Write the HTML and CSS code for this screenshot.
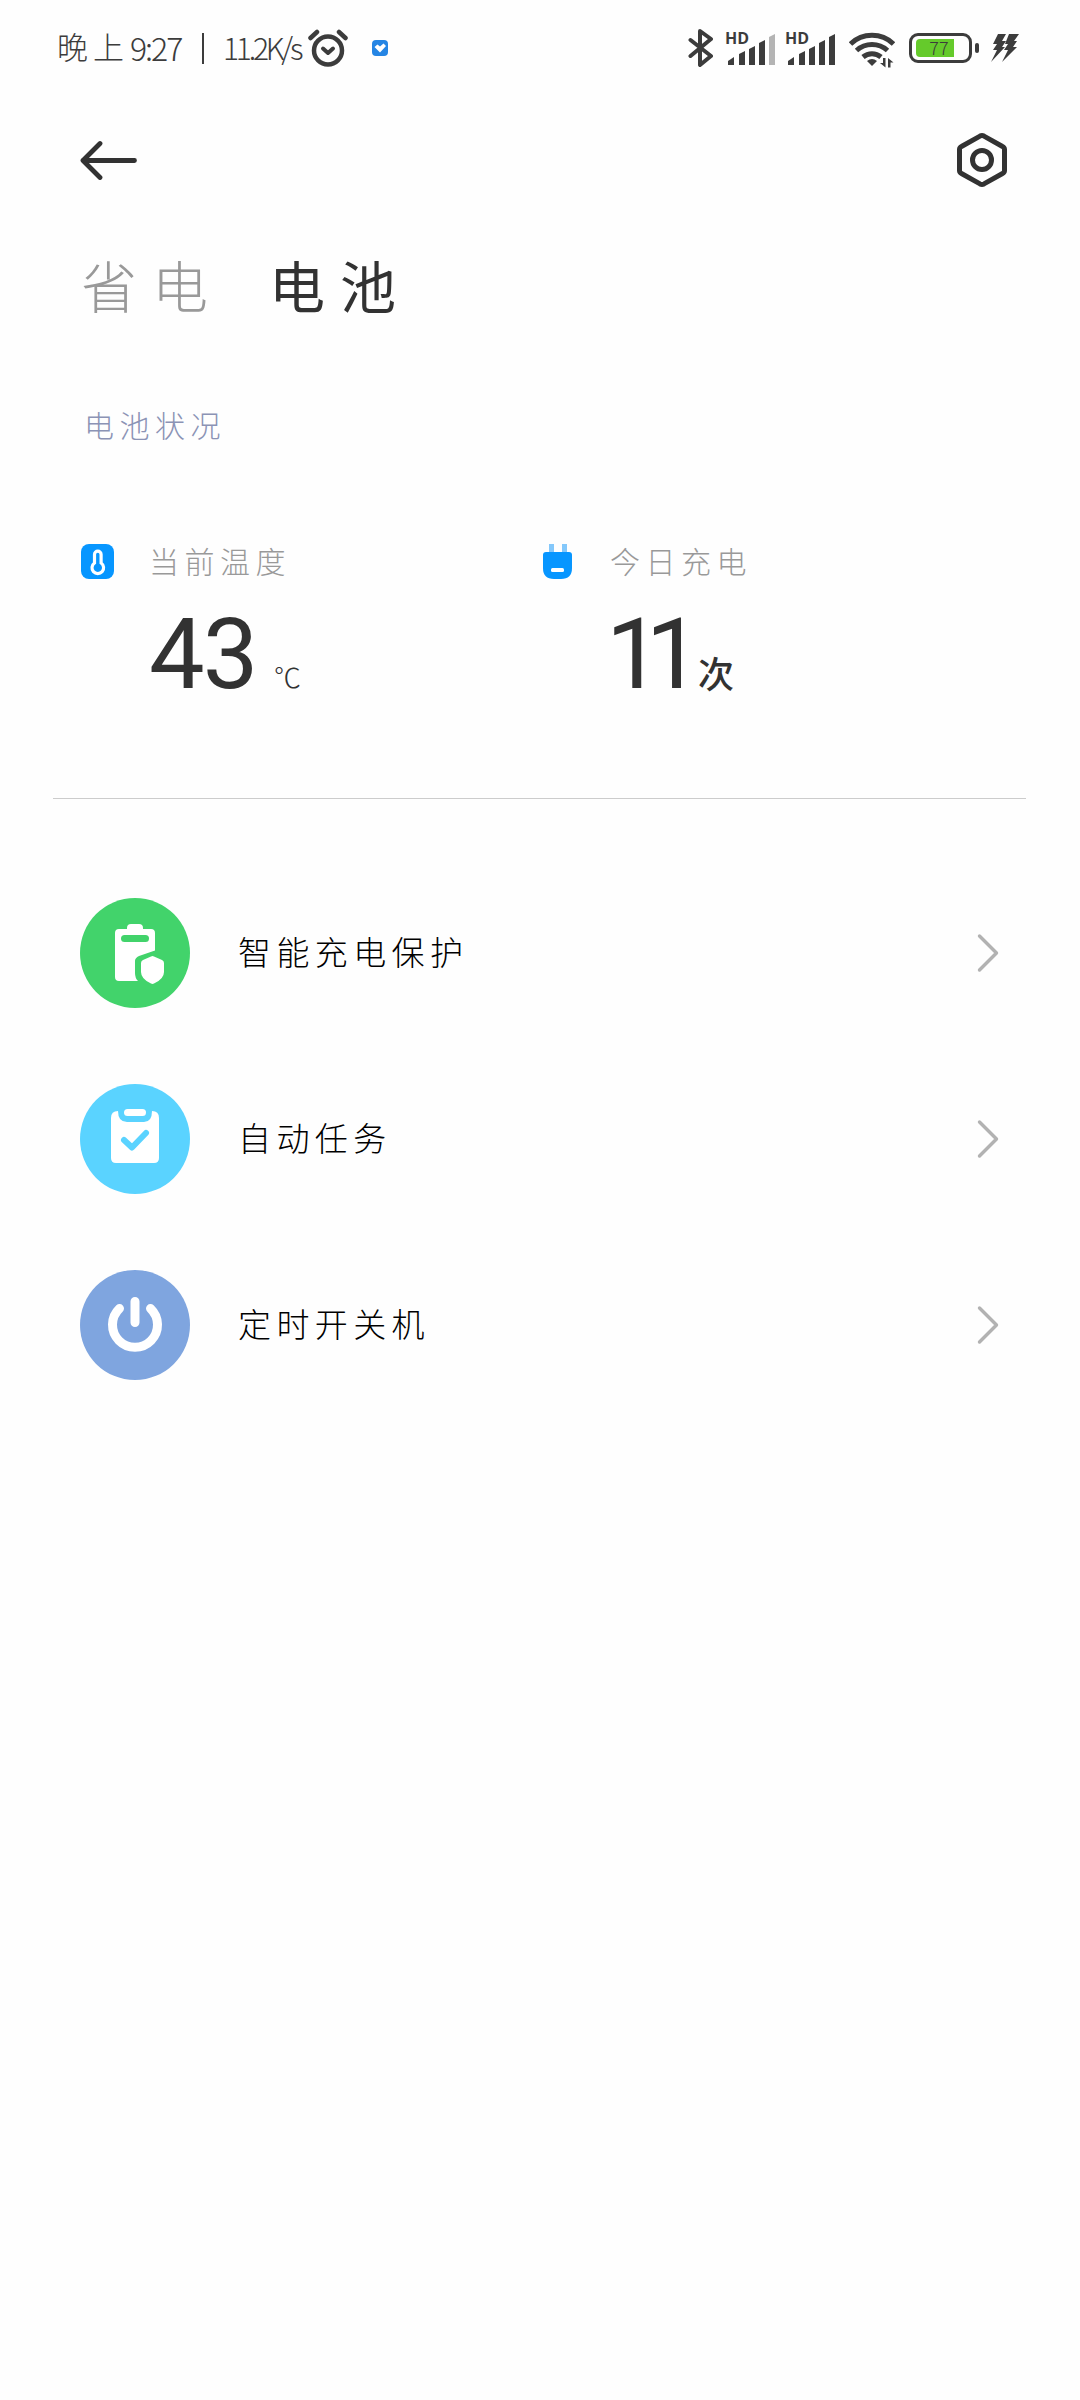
FILE: index.html
```html
<!DOCTYPE html>
<html lang="zh-CN">
<head>
  <meta charset="UTF-8">
  <title>电池</title>
  <link rel="stylesheet" href="styles.css">
</head>
<body>
  <div class="status-bar">
    <div class="status-left">
      <span class="period">晚上</span>
      <span class="time">9:27</span>
      <span class="separator"></span>
      <span class="speed">11.2K/s</span>
      <svg class="alarm" width="40" height="38" viewBox="0 0 40 38" fill="none" stroke="#3c3c3c" stroke-linecap="round">
        <circle cx="20" cy="21.5" r="14" stroke-width="4.500"/>
        <path d="M2.500 9L9 3M31 3l6.500 6" stroke-width="4.500"/>
        <path d="M15 19.500l5 4.500 5-4.500" stroke-width="4" stroke-linejoin="round"/>
      </svg>
      <svg width="16" height="16" viewBox="0 0 16 16">
        <rect width="16" height="16" rx="4" fill="#2585e4"/>
        <path d="M2.500 7l3-2.500L8 6.500l3.500-3L14 6 8 12.500z" fill="#fff"/>
      </svg>
    </div>
    <div class="status-right">
      <svg class="bluetooth" width="26" height="40" viewBox="0 0 26 40" fill="none" stroke="#3c3c3c" stroke-width="4" stroke-linejoin="round" stroke-linecap="round">
        <path d="M2.500 12L23 28l-11 9V3l11 8L2.500 28"/>
      </svg>
      <div class="signal">
        <span class="hd">HD</span>
        <svg width="50" height="32" viewBox="0 0 50 32" fill="#3c3c3c">
          <path d="M1 32v-4l6-4v8zM12 32V21l6-3v14zM22 32V16l6-3v19zM32 32V10l6-3v25z"/>
          <path d="M42 32V4l6-3v31z" fill="#b4b4b4"/>
        </svg>
      </div>
      <div class="signal">
        <span class="hd">HD</span>
        <svg width="50" height="32" viewBox="0 0 50 32" fill="#3c3c3c">
          <path d="M1 32v-4l6-4v8zM12 32V21l6-3v14zM22 32V16l6-3v19zM32 32V10l6-3v25zM42 32V4l6-3v31z"/>
        </svg>
      </div>
      <svg class="wifi" width="46" height="36" viewBox="0 0 46 36" fill="none" stroke="#3c3c3c" stroke-width="5">
        <path d="M1.500 12a31 31 0 0 1 43 0M7.500 18.500a23 23 0 0 1 31 0M14 25a14 14 0 0 1 18 0"/>
        <path d="M18 29q5-4 10 0l-5 5z" fill="#3c3c3c" stroke="none"/>
        <path d="M31 31l5.500 4.500V26H34v5zM39 35.500V26l5.500 4.500h-3v5z" fill="#3c3c3c" stroke="none"/>
      </svg>
      <div class="battery">
        <div class="battery-body">
          <div class="battery-level">77</div>
        </div>
        <div class="battery-cap"></div>
      </div>
      <svg class="bolt" width="28" height="28" viewBox="0 0 28 28" fill="#3c3c3c">
        <path d="M7 0h8l-4 7h4l-4 6h3L0 28l6-12H2l4-6H2z"/>
        <path d="M18 0h10l-5 7h3l-4 6h4L11 28l6-12h-4l4-6h-3z"/>
      </svg>
    </div>
  </div>

  <div class="header">
    <svg width="58" height="40" viewBox="0 0 58 40" fill="none" stroke="#323232" stroke-width="4.800" stroke-linecap="round" stroke-linejoin="round">
      <path d="M20 3.500L3 20.500l17 17M3 20.500h51.500"/>
    </svg>
    <svg width="50" height="54" viewBox="0 0 50 54" fill="none" stroke="#323232" stroke-width="5">
      <path d="M23 3.100q2-1 4 0l18.500 10.400q2 1 2 3v21q0 2-2 3L27 50.900q-2 1-4 0L4.500 40.500q-2-1-2-3v-21q0-2 2-3z"/>
      <circle cx="25" cy="27" r="9.500"/>
    </svg>
  </div>

  <div class="tabs">
    <span class="tab">省电</span>
    <span class="tab active">电池</span>
  </div>

  <div class="section-title">电池状况</div>

  <div class="stats">
    <div class="stat">
      <div class="stat-label">
        <svg width="34" height="36" viewBox="0 0 34 36">
          <rect x="0" y="0" width="33" height="35" rx="8" fill="#0796ff"/>
          <path d="M13.500 19v-8.500a3.300 3.300 0 0 1 6.600 0V19a5.800 5.800 0 1 1-6.600 0z" fill="none" stroke="#fff" stroke-width="3.200"/>
        </svg>
        <span>当前温度</span>
      </div>
      <div class="stat-value">
        <span class="number">43</span>
        <span class="celsius">℃</span>
      </div>
    </div>
    <div class="stat">
      <div class="stat-label">
        <svg width="34" height="36" viewBox="0 0 34 36">
          <path d="M7 0h5v9H7zM20 0h5v9h-5z" fill="#84c8fb"/>
          <path d="M4 8h23q3 0 3 3v13q0 11-11 11h-7Q1 35 1 24V11q0-3 3-3z" fill="#0796ff"/>
          <rect x="9" y="24" width="13" height="4" rx="1.500" fill="#fff"/>
        </svg>
        <span>今日充电</span>
      </div>
      <div class="stat-value">
        <span class="number ones">11</span>
        <span class="times">次</span>
      </div>
    </div>
  </div>

  <div class="list">
    <div class="item">
      <svg class="item-icon" width="110" height="110" viewBox="0 0 110 110">
        <circle cx="55" cy="55" r="55" fill="#42d36b"/>
        <path d="M39 31h8v-1q0-4 4-4h8q4 0 4 4v1h8q4 0 4 4v17.500L59 58q-4 2-4 5v12q0 5 3 8H39q-4 0-4-4V35q0-4 4-4z" fill="#fff"/>
        <rect x="41" y="37" width="28" height="7" rx="3.500" fill="#42d36b"/>
        <path d="M71 58.500q1.500-.800 3 0l8 3.500q2 1 2 3v9q0 7-10 11.500-1.500.800-3 0Q61 81 61 74v-9q0-2 2-3z" fill="#fff"/>
      </svg>
      <span class="item-label">智能充电保护</span>
      <svg class="arrow" width="22" height="40" viewBox="0 0 22 40"><path d="M2.500 3l17 17-17 17"/></svg>
    </div>
    <div class="item">
      <svg class="item-icon" width="110" height="110" viewBox="0 0 110 110">
        <circle cx="55" cy="55" r="55" fill="#5ad3ff"/>
        <path d="M38 27q-7 0-7 7v40q0 5 5 5h38q5 0 5-5V34q0-7-7-7 0 11-8 11H47q-9 0-9-11z" fill="#fff"/>
        <rect x="44" y="25" width="22" height="7" rx="3.500" fill="#fff"/>
        <path d="M44 56l8 7.500L66 49" fill="none" stroke="#5ad3ff" stroke-width="6" stroke-linecap="round" stroke-linejoin="round"/>
      </svg>
      <span class="item-label">自动任务</span>
      <svg class="arrow" width="22" height="40" viewBox="0 0 22 40"><path d="M2.500 3l17 17-17 17"/></svg>
    </div>
    <div class="item">
      <svg class="item-icon" width="110" height="110" viewBox="0 0 110 110">
        <circle cx="55" cy="55" r="55" fill="#7fa5df"/>
        <path d="M55 31.500v21M39.500 38.500a22.500 22.500 0 1 0 31 0" fill="none" stroke="#fff" stroke-width="9" stroke-linecap="round"/>
      </svg>
      <span class="item-label">定时开关机</span>
      <svg class="arrow" width="22" height="40" viewBox="0 0 22 40"><path d="M2.500 3l17 17-17 17"/></svg>
    </div>
  </div>
</body>
</html>
```
FILE: styles.css
```css
* {
  box-sizing: border-box;
}

body {
  margin: 0;
  min-height: 2400px;
  background: #fefefe;
  font-family: "Noto Sans CJK SC", sans-serif;
  font-weight: 300;
  color: #323232;
}

svg {
  display: block;
  flex: none;
}

.status-bar {
  display: flex;
  justify-content: space-between;
  align-items: center;
  height: 96px;
  padding: 0 61px 0 57px;
  color: #3c3c3c;
}

.status-left,
.status-right {
  display: flex;
  align-items: center;
  white-space: nowrap;
}

.period {
  width: 73px;
  padding-bottom: 5px;
  font-size: 31px;
  letter-spacing: 5px;
}

.time {
  width: 63px;
  padding-bottom: 3px;
  font-size: 32px;
  letter-spacing: -2px;
}

.separator {
  width: 2px;
  height: 31px;
  margin: 0 19px 0 9px;
  background: #3c3c3c;
}

.speed {
  width: 85px;
  padding-bottom: 3px;
  font-size: 30px;
  letter-spacing: -3.2px;
}

.alarm {
  margin-right: 24px;
}

.signal {
  position: relative;
  padding-top: 2px;
  margin-right: 10px;
}

.hd {
  position: absolute;
  left: -2px;
  top: -1px;
  font: 700 16px/16px "Open Sans", sans-serif;
}

.bluetooth {
  margin-right: 13px;
}

.wifi {
  margin: 4px 14px 0 2px;
}

.battery {
  display: flex;
  align-items: center;
  margin-right: 12px;
}

.battery-body {
  width: 63px;
  height: 30px;
  padding: 3px 4px;
  border: 3px solid #3c3c3c;
  border-radius: 9px;
}

.battery-level {
  width: 38px;
  height: 18px;
  padding-left: 8px;
  border-radius: 4px 0 0 4px;
  background: #65ca2b;
  font-size: 18px;
  line-height: 17px;
  text-align: center;
}

.battery-cap {
  width: 4px;
  height: 10px;
  margin-left: 3px;
  border-radius: 2px;
  background: #3c3c3c;
}

.header {
  display: flex;
  justify-content: space-between;
  align-items: center;
  height: 128px;
  padding: 0 73px 0 80px;
}

.tabs {
  display: flex;
  gap: 46px;
  height: 128px;
  padding-left: 81px;
  font-size: 56px;
  line-height: 120px;
}

.tab {
  width: 142px;
  letter-spacing: 15px;
  color: #999;
}

.tab.active {
  font-weight: 400;
  color: #323232;
}

.section-title {
  height: 148px;
  padding-left: 84px;
  font-size: 30px;
  line-height: 145px;
  letter-spacing: 5.5px;
  color: #8b93b5;
}

.stats {
  display: grid;
  grid-template-columns: 461px 1fr;
  height: 299px;
  margin: 0 54px 0 53px;
  padding: 40px 27px 0 28px;
  border-bottom: 1px solid #ccc;
}

.stat-label {
  display: flex;
  align-items: center;
  gap: 34px;
  height: 44px;
  font-size: 30px;
  line-height: 38px;
  letter-spacing: 5.5px;
  color: #999;
}

.stat-label span {
  padding-bottom: 5px;
}

.stat-value {
  display: flex;
  align-items: baseline;
  padding-left: 68px;
}

.number {
  width: 125px;
  font: 400 99px/141px Roboto, sans-serif;
  letter-spacing: -2px;
}

.number.ones {
  width: 88px;
  margin-left: -4px;
  letter-spacing: -16px;
}

.celsius {
  font-size: 27px;
}

.times {
  margin-left: 4px;
  font-size: 36px;
  font-weight: 500;
}

.list {
  padding-top: 61px;
}

.item {
  display: flex;
  align-items: center;
  height: 186px;
  padding: 0 81px 0 80px;
}

.item-label {
  flex: 1;
  margin-left: 48px;
  padding-bottom: 5px;
  font-size: 33px;
  letter-spacing: 5.4px;
  color: #000;
}

.arrow path {
  fill: none;
  stroke: #b2b2b2;
  stroke-width: 3.4;
  stroke-linecap: round;
  stroke-linejoin: round;
}
```
